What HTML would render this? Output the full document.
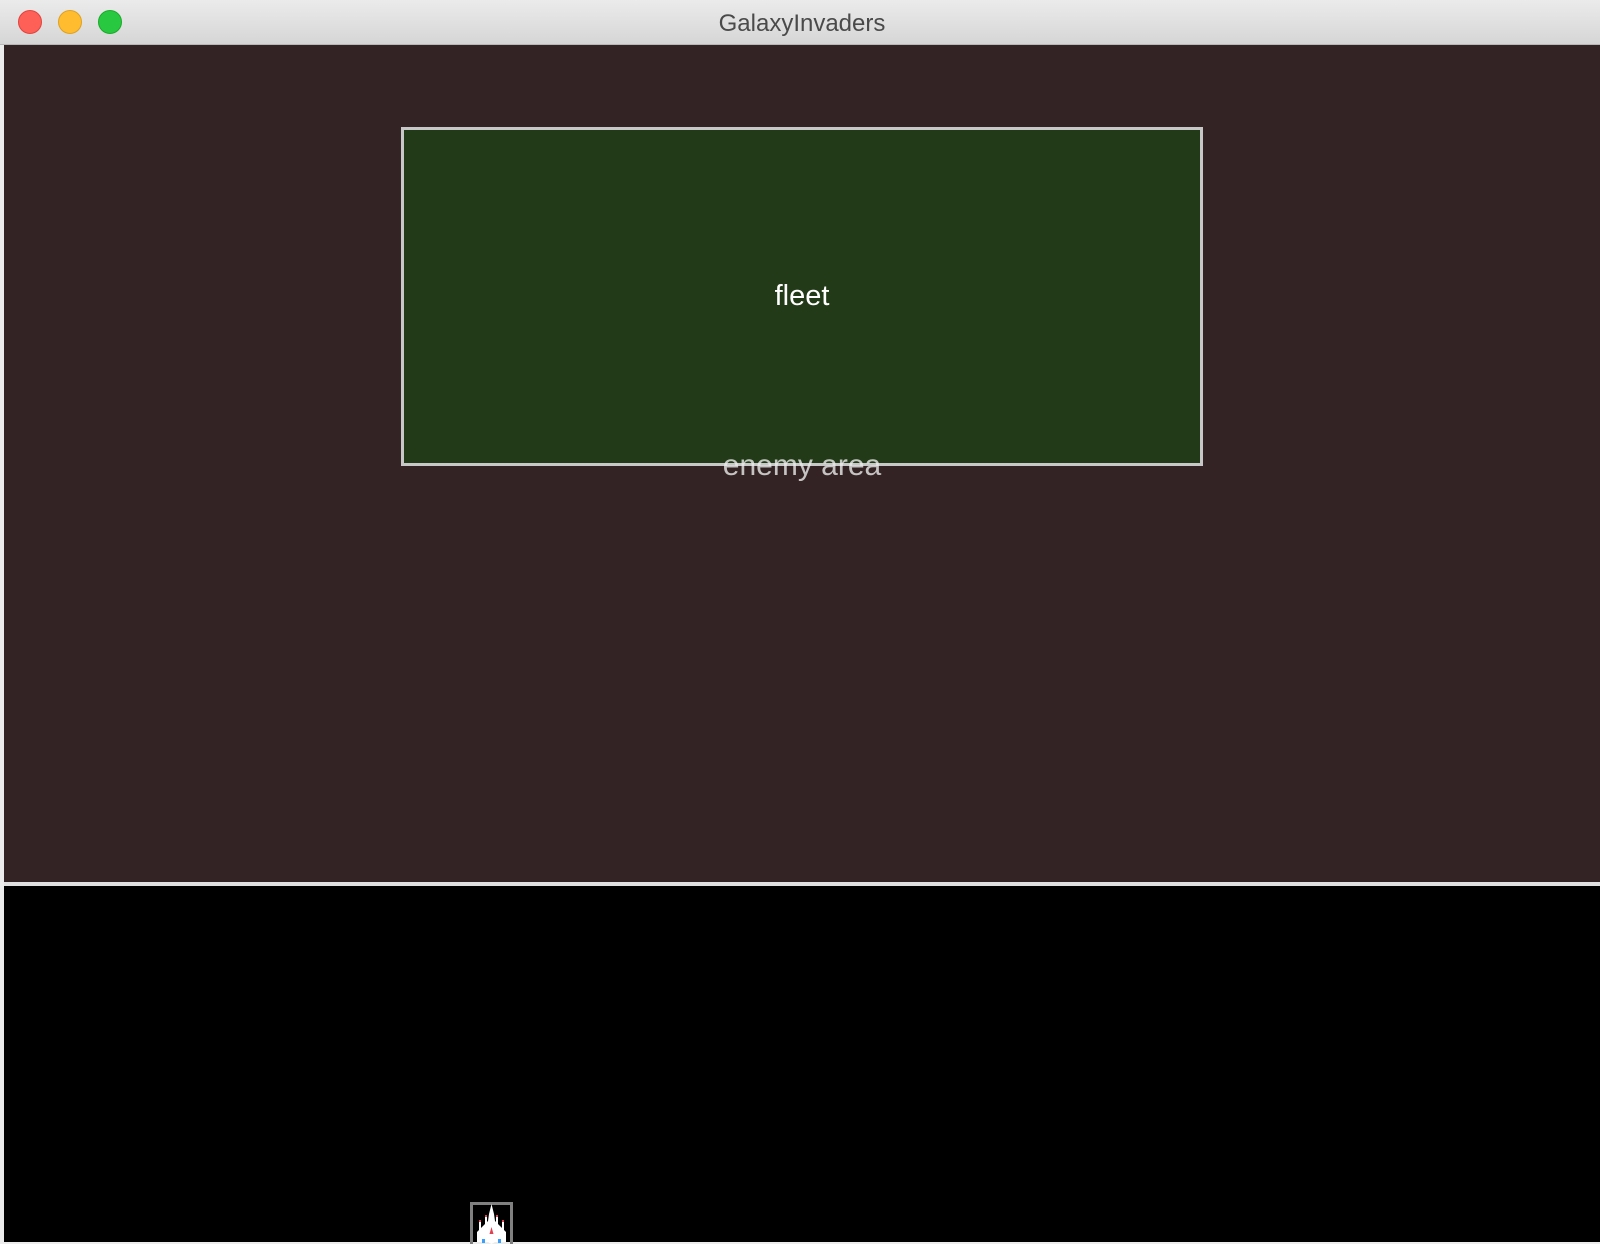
<!DOCTYPE html>
<html><head><meta charset="utf-8"><style>
html,body{margin:0;padding:0;width:1600px;height:1244px;overflow:hidden;background:#ececec;font-family:"Liberation Sans",sans-serif}
.tb{position:absolute;left:0;top:0;width:1600px;height:45px;background:linear-gradient(#ebebeb,#d6d6d6);border-bottom:1px solid #b8b8b8;box-sizing:border-box}
.dot{position:absolute;top:10px;width:24px;height:24px;border-radius:50%;box-sizing:border-box}
.title{position:absolute;left:2px;width:1600px;top:10px;text-align:center;font-size:24px;color:#4a4a4a}
.top{position:absolute;left:4px;top:45px;width:1596px;height:837px;background:#332325}
.sep{position:absolute;left:4px;top:882px;width:1596px;height:4px;background:#e0e0e0}
.bot{position:absolute;left:4px;top:886px;width:1596px;height:356px;background:#000}
.box{position:absolute;left:401px;top:127px;width:802px;height:339px;background:#223a17;border:3px solid #c8c8c8;box-sizing:border-box}
.t{position:absolute;width:1600px;left:0;text-align:center;color:#fff;font-size:29px}
</style></head><body>
<div class="tb">
<div class="dot" style="left:18px;background:#fe5f57;border:1px solid #e0443e"></div>
<div class="dot" style="left:58px;background:#febc2e;border:1px solid #dea123"></div>
<div class="dot" style="left:98px;background:#28c840;border:1px solid #1aab29"></div>
<div class="title">GalaxyInvaders</div>
</div>
<div class="top"></div>
<div class="box"></div>
<div class="t" style="top:280px;left:2px">fleet</div>
<div class="t" style="top:449px;left:2px;font-size:30px;color:rgba(235,235,235,0.8)">enemy area</div>
<div class="sep"></div>
<div class="bot"></div>
<div style="position:absolute;left:470px;top:1202px;width:43px;height:42px;border:3px solid #808080;border-bottom:none;box-sizing:border-box"></div>
<svg style="position:absolute;left:470px;top:1202px" width="43" height="42" viewBox="0 0 43 42">
<path d="M21.5 2 L24 12 L25 19 L36 30 L36 40 L25 40 L21.5 42 L18 40 L7 40 L7 30 L18 19 L19 12 Z" fill="#fff"/>
<rect x="9" y="19" width="2" height="14" fill="#fff"/><rect x="32" y="19" width="2" height="14" fill="#fff"/>
<rect x="9" y="18" width="2" height="2" fill="#e04050"/><rect x="32" y="18" width="2" height="2" fill="#e04050"/>
<rect x="15" y="14" width="2" height="12" fill="#fff"/><rect x="26" y="14" width="2" height="12" fill="#fff"/>
<rect x="15" y="13" width="2" height="2" fill="#e04050"/><rect x="26" y="13" width="2" height="2" fill="#e04050"/>
<path d="M21.5 25 L23.5 32 L19.5 32 Z" fill="#e04050"/>
<rect x="12" y="37" width="3" height="4" fill="#3aa0ff"/><rect x="28" y="37" width="3" height="4" fill="#3aa0ff"/>
</svg>
</body></html>
